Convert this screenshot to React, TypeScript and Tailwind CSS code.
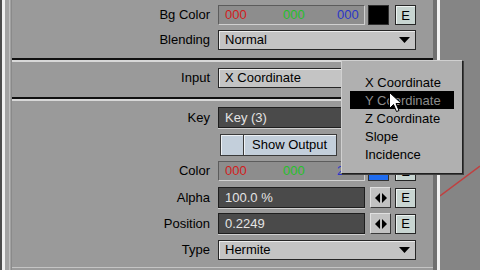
import React from "react";

const Label = ({ children }: { children: React.ReactNode }) => (
  <div className="w-[199px] shrink-0 pr-[1px] text-right text-[13px] text-black">{children}</div>
);

const EButton = () => (
  <div className="flex h-[20px] w-[21px] shrink-0 items-center justify-center border border-[#262626] bg-[#c8d5d1] text-[13px] leading-none text-black shadow-[inset_1px_1px_0_#eef4f2]">
    E
  </div>
);

const ArrowButton = () => (
  <div className="flex h-[21px] w-[21px] shrink-0 items-center justify-center border border-t-[#e0e0e0] border-l-[#e0e0e0] border-b-[#3a3a3a] border-r-[#3a3a3a] bg-[#c2c2c2]">
    <svg width="12" height="10" viewBox="0 0 12 10">
      <path d="M5 0 L0 5 L5 10 Z" fill="#000" />
      <path d="M7 0 L12 5 L7 10 Z" fill="#000" />
    </svg>
  </div>
);

const Dropdown = ({ value }: { value: string }) => (
  <div className="flex h-[20px] w-[198px] items-center justify-between border border-[#262626] bg-[#c4c4c4] pl-[6px] pr-[5px] shadow-[inset_1px_1px_0_#ececec]">
    <span className="text-[13px] text-black">{value}</span>
    <svg width="11" height="6" viewBox="0 0 11 6">
      <path d="M0 0 H11 L5.5 6 Z" fill="#000" />
    </svg>
  </div>
);

const ColorField = ({ blue = "000" }: { blue?: string }) => (
  <div className="flex h-[20px] w-[147px] shrink-0 items-center border border-t-[#5c5c5c] border-l-[#5c5c5c] border-b-[#d0d0d0] border-r-[#d0d0d0] bg-[#8d8d8d] pl-[6px] text-[13px]">
    <span className="w-[58px] text-[#d21c1c]">000</span>
    <span className="w-[54px] text-[#25c02a]">000</span>
    <span className="text-[#2a36c8]">{blue}</span>
  </div>
);

const DarkField = ({ value, w = "w-[147px]" }: { value: string; w?: string }) => (
  <div
    className={`flex h-[21px] ${w} shrink-0 items-center border border-[#1e1e1e] bg-[#4a4a4a] pl-[6px] text-[13px] text-[#e4e4e4] shadow-[0_1px_0_#cfcfcf]`}
  >
    {value}
  </div>
);

const Separator = ({ mt }: { mt: string }) => (
  <div className={`${mt} flex flex-col`}>
    <div className="h-[2px] bg-[#101010]" />
    <div className="h-[2px] bg-[#d8d8d8]" />
  </div>
);

const menuItems = ["X Coordinate", "Y Coordinate", "Z Coordinate", "Slope", "Incidence"];

export default function App() {
  return (
    <div className="relative flex h-[270px] w-[480px] overflow-hidden bg-[#9a9a9a] font-['Liberation_Sans',Arial,sans-serif]">
      <div className="w-[2px] bg-[#4c4c4c]" />
      <div className="w-[3px] bg-[#efefef]" />
      <div className="flex w-[7px] bg-[#a2a2a2]">
        <div className="ml-[4px] w-[1px] bg-[#bdbdbd]" />
        <div className="ml-[1px] w-[1px] bg-[#8a8a8a]" />
      </div>

      {/* surface panel */}
      <div className="flex w-[421px] flex-col bg-[#9a9a9a]">
        <div className="mt-[5px] flex items-center gap-[7px]">
          <Label>Bg Color</Label>
          <div className="flex items-center">
            <ColorField />
            <div className="ml-[3px] h-[20px] w-[21px] border border-[#303030] bg-black" />
            <div className="ml-[6px]">
              <EButton />
            </div>
          </div>
        </div>

        <div className="mt-[5px] flex items-center gap-[7px]">
          <Label>Blending</Label>
          <Dropdown value="Normal" />
        </div>

        <Separator mt="mt-[8px]" />

        <div className="mt-[6px] flex items-center gap-[7px]">
          <Label>Input</Label>
          <Dropdown value="X Coordinate" />
        </div>

        <Separator mt="mt-[9px]" />

        <div className="mt-[6px] flex items-center gap-[7px]">
          <Label>Key</Label>
          <DarkField value="Key (3)" w="w-[198px]" />
        </div>

        <div className="mt-[6px] flex items-center gap-[7px]">
          <div className="w-[199px] shrink-0" />
          <div className="flex h-[22px]">
            <div className="ml-[2px] w-[24px] border border-[#3a3a3a] bg-[#c3cfdb] shadow-[inset_1px_1px_0_#eef2f6]" />
            <div className="flex w-[93px] items-center border border-l-0 border-[#3a3a3a] bg-[#c3cfdb] pl-[8px] text-[13px] text-black shadow-[inset_1px_1px_0_#eef2f6]">
              Show Output
            </div>
          </div>
        </div>

        <div className="mt-[5px] flex items-center gap-[7px]">
          <Label>Color</Label>
          <div className="flex items-center">
            <ColorField blue="200" />
            <div className="ml-[3px] h-[20px] w-[21px] border border-[#303030] bg-[#1f6cf0]" />
            <div className="ml-[6px]">
              <EButton />
            </div>
          </div>
        </div>

        <div className="mt-[6px] flex items-center gap-[7px]">
          <Label>Alpha</Label>
          <div className="flex items-center">
            <DarkField value="100.0 %" />
            <div className="ml-[5px]">
              <ArrowButton />
            </div>
            <div className="ml-[4px]">
              <EButton />
            </div>
          </div>
        </div>

        <div className="mt-[5px] flex items-center gap-[7px]">
          <Label>Position</Label>
          <div className="flex items-center">
            <DarkField value="0.2249" />
            <div className="ml-[5px]">
              <ArrowButton />
            </div>
            <div className="ml-[4px]">
              <EButton />
            </div>
          </div>
        </div>

        <div className="mt-[6px] flex items-center gap-[7px]">
          <Label>Type</Label>
          <Dropdown value="Hermite" />
        </div>

        <div className="mt-auto mb-[2px] h-[1px] bg-[#c4c4c4]" />
      </div>

      <div className="w-[4px] bg-[#707070]" />
      <div className="w-[3px] bg-[#f2f2f2]" />

      {/* viewport */}
      <div className="relative flex-1 bg-[#858585]">
        <svg className="absolute left-0 top-0" width="40" height="270" viewBox="0 0 40 270">
          <line x1="0" y1="196" x2="40" y2="166" stroke="#c04040" strokeWidth="1.5" />
        </svg>
      </div>

      {/* popup menu */}
      <div className="absolute left-[341px] top-[60px] flex h-[114px] w-[122px] flex-col border border-t-[#d0d0d0] border-l-[#d0d0d0] border-b-[#202020] border-r-[#202020] bg-[#b0b0b0] pt-[12px] shadow-[1px_1px_0_#404040]">
        {menuItems.map((item, i) => (
          <div
            key={item}
            className={`mx-[8px] flex h-[18px] items-center pl-[15px] text-[13px] leading-none ${
              i === 1 ? "bg-black text-[#8c8c8c]" : "text-black"
            }`}
          >
            {item}
          </div>
        ))}
      </div>

      {/* mouse cursor */}
      <svg className="absolute left-[389px] top-[92px]" width="13" height="21" viewBox="0 0 13 21">
        <path d="M0.5 0.5 L0.5 16.5 L4.5 12.5 L7.5 19.5 L10 18.5 L7 11.5 L12.5 11.5 Z" fill="#fff" stroke="#000" strokeWidth="1" />
      </svg>
    </div>
  );
}
